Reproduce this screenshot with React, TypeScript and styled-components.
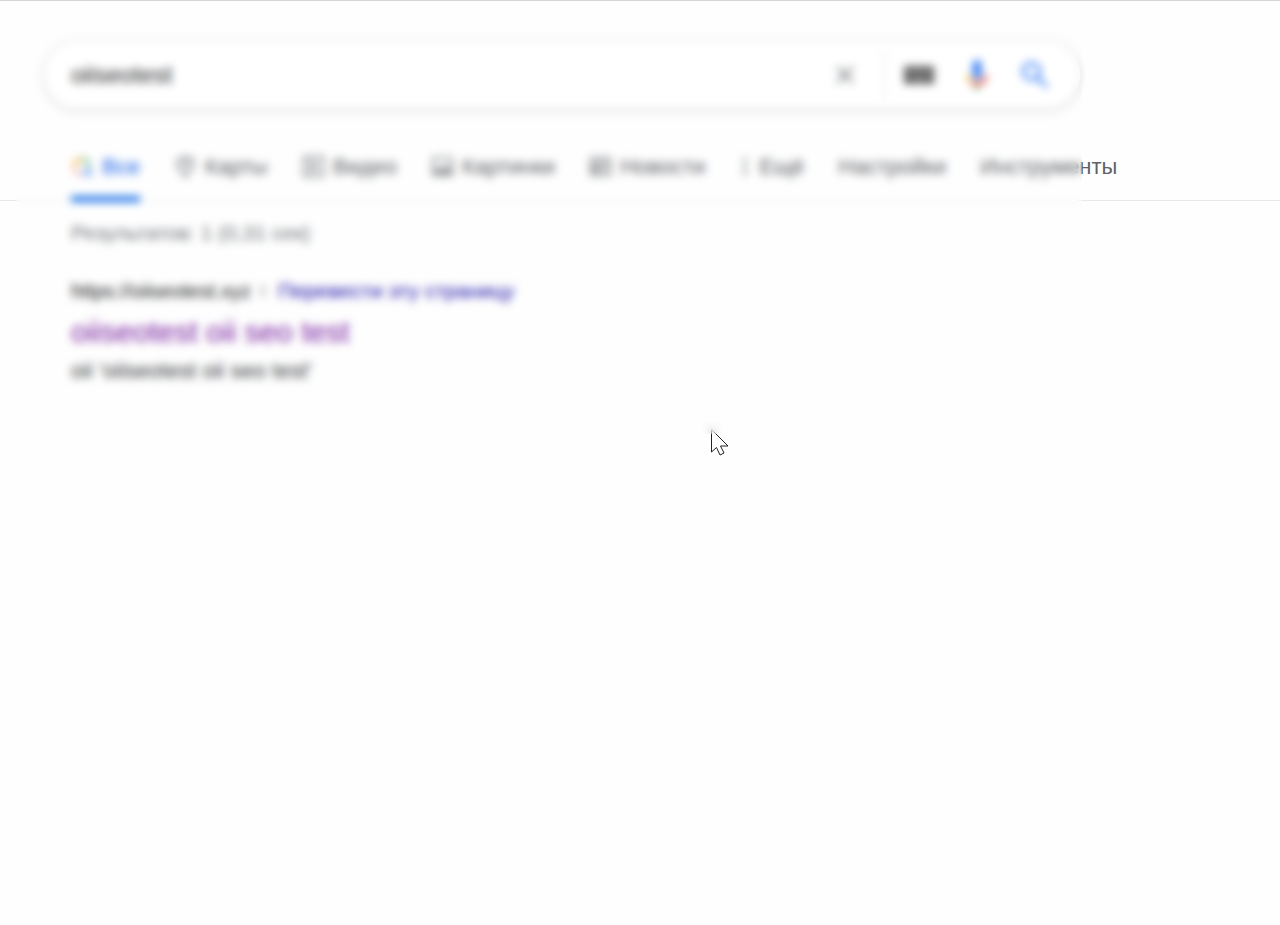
import React from "react";
import styled, { createGlobalStyle } from "styled-components";

const Global = createGlobalStyle`
  * { box-sizing: border-box; }
  body {
    margin: 0;
    background: #fefefe;
    color: #202124;
    font-family: "Liberation Sans", Arial, sans-serif;
  }
`;

const Page = styled.div`
  position: relative;
  min-height: 100vh;
  border-top: 1px solid #d6d6d6;
`;

const Header = styled.header`
  padding: 40px 0 0;
  border-bottom: 1px solid #e8e8e8;
`;

const SearchBar = styled.form`
  display: flex;
  align-items: center;
  max-width: 1036px;
  height: 68px;
  margin: 0 44px;
  padding: 0 16px 0 27px;
  border-radius: 34px;
  background: #fff;
  box-shadow: 0 1px 6px rgba(32, 33, 36, 0.24);
`;

const SearchInput = styled.input`
  flex: 1;
  min-width: 0;
  padding: 0;
  border: 0;
  outline: 0;
  background: transparent;
  color: #303134;
  font: 24px/32px "Liberation Sans", Arial, sans-serif;
`;

const IconButton = styled.button`
  display: flex;
  align-items: center;
  justify-content: center;
  width: 58px;
  height: 48px;
  padding: 0;
  border: 0;
  background: transparent;
`;

const Divider = styled.span`
  width: 1px;
  height: 48px;
  margin: 0 5px 0 10px;
  background: #dfe1e5;
`;

const Tabs = styled.nav`
  display: flex;
  gap: 34px;
  margin: 36px 0 -2px;
  padding-left: 71px;
`;

const Tab = styled.a<{ $active?: boolean }>`
  display: flex;
  align-items: center;
  gap: 8px;
  height: 57px;
  padding: 4px 0 12px;
  border-bottom: 6px solid ${(p) => (p.$active ? "#1a73e8" : "transparent")};
  color: ${(p) => (p.$active ? "#1a66e8" : "#5f6368")};
  font-size: 22px;
  line-height: 24px;
  text-decoration: none;
  white-space: nowrap;
`;

const Results = styled.main`
  padding: 18px 71px 0;
`;

const Stats = styled.p`
  margin: 0;
  color: #70757a;
  font-size: 21px;
  line-height: 28px;
`;

const Result = styled.article`
  margin-top: 30px;
`;

const Source = styled.div`
  display: flex;
  align-items: center;
  gap: 11px;
  font-size: 21px;
  line-height: 28px;
`;

const Site = styled.cite`
  color: #202124;
  font-size: 20px;
  font-style: normal;
`;

const Caret = styled.span`
  width: 5px;
  height: 12px;
  border-left: 2px solid #8a8d91;
`;

const Translate = styled.a`
  color: #1a0dab;
  text-decoration: none;
`;

const Title = styled.h3`
  margin: 8px 0 6px;
  font-size: 30px;
  font-weight: 400;
  line-height: 38px;

  a {
    color: #7b1fa2;
    text-decoration: none;
  }
`;

const Snippet = styled.p`
  margin: 0;
  color: #3c4043;
  font-size: 22px;
  line-height: 28px;
`;

const Veil = styled.div`
  position: absolute;
  top: 24px;
  left: 16px;
  width: calc(100% - 32px);
  max-width: 1066px;
  height: 409px;
  backdrop-filter: blur(4px);
  pointer-events: none;
`;

const Pointer = styled.svg`
  position: absolute;
  top: 426px;
  left: 710px;
`;

const Stroke = ({ children }: { children: React.ReactNode }) => (
  <svg width="23" height="23" viewBox="0 0 24 24" fill="none" stroke="#70757a" strokeWidth="2" aria-hidden="true">
    {children}
  </svg>
);

export default function App() {
  return (
    <>
      <Global />
      <Page>
        <Header>
          <SearchBar onSubmit={(e) => e.preventDefault()}>
            <SearchInput type="text" aria-label="Поиск" defaultValue="oiiseotest" />
            <IconButton type="button" aria-label="Очистить">
              <svg width="24" height="24" viewBox="0 0 24 24" stroke="#70757a" strokeWidth="2.4">
                <path d="M4 4l16 16M20 4L4 20" />
              </svg>
            </IconButton>
            <Divider />
            <IconButton type="button" aria-label="Экранная клавиатура">
              <svg width="32" height="20" viewBox="0 0 32 20">
                <rect x="1" y="1" width="30" height="18" fill="#606060" />
                <path d="M4 6h24M4 10h24" stroke="#ccc" strokeWidth="2" strokeDasharray="2 3" />
                <path d="M9 15h14" stroke="#aaa" strokeWidth="2" />
              </svg>
            </IconButton>
            <IconButton type="button" aria-label="Голосовой поиск">
              <svg width="36" height="36" viewBox="0 0 24 24">
                <path fill="#4285f4" d="M12 15c1.700 0 3-1.300 3-3V5c0-1.700-1.300-3-3-3S9 3.300 9 5v7c0 1.700 1.300 3 3 3z" />
                <path fill="#34a853" d="M11 18.900h2V22h-2z" />
                <path fill="#fbbc05" d="M7 12H5c0 1.900.8 3.700 2.100 4.900l1.400-1.400C7.600 14.700 7 13.400 7 12z" />
                <path fill="#ea4335" d="M12 17c-1.400 0-2.600-.5-3.500-1.500l-1.400 1.400C8.300 18.200 10.100 19 12 19c3.900 0 7-3.100 7-7h-2c0 2.800-2.200 5-5 5z" />
              </svg>
            </IconButton>
            <IconButton type="submit" aria-label="Найти">
              <svg width="34" height="34" viewBox="0 0 24 24" fill="none" stroke="#4285f4" strokeWidth="2.200">
                <circle cx="9.500" cy="9.500" r="5.800" />
                <path d="M14 14l6.500 6.500" />
              </svg>
            </IconButton>
          </SearchBar>
          <Tabs>
            <Tab $active href="#all">
              <svg width="23" height="23" viewBox="0 0 24 24" fill="none" strokeWidth="2.400" aria-hidden="true">
                <path d="M3 12a8 8 0 0 1 8-8" stroke="#f29900" />
                <path d="M11 4a8 8 0 0 1 8 8" stroke="#34a853" />
                <path d="M3 12a8 8 0 0 0 8 8" stroke="#ea4335" strokeOpacity=".5" />
                <path d="M19 12a8 8 0 0 1-8 8M17 17l5 5" stroke="#4285f4" />
              </svg>
              Все
            </Tab>
            <Tab href="#maps">
              <Stroke>
                <path d="M12 23C9 17 3 14 3 9a9 7 0 0 1 18 0c0 5-6 8-9 14z" />
                <circle cx="12" cy="9" r="2" />
              </Stroke>
              Карты
            </Tab>
            <Tab href="#video">
              <Stroke>
                <rect x="2" y="2" width="20" height="20" />
                <path d="M9 7l7 5-7 5z" />
              </Stroke>
              Видео
            </Tab>
            <Tab href="#images">
              <Stroke>
                <rect x="2" y="3" width="20" height="18" rx="2" />
                <path d="M5 18l5-5 3 3 3-4 4 6z" />
              </Stroke>
              Картинки
            </Tab>
            <Tab href="#news">
              <Stroke>
                <rect x="2" y="3" width="20" height="18" rx="2" />
                <path d="M5 8h14M5 12h6v5H5zM14 12h5M14 16h5" />
              </Stroke>
              Новости
            </Tab>
            <Tab href="#more">
              <svg width="12" height="23" viewBox="0 0 12 24" fill="#70757a" aria-hidden="true">
                <circle cx="6" cy="5" r="2" />
                <circle cx="6" cy="12" r="2" />
                <circle cx="6" cy="19" r="2" />
              </svg>
              Ещё
            </Tab>
            <Tab href="#settings">Настройки</Tab>
            <Tab href="#tools">Инструменты</Tab>
          </Tabs>
        </Header>
        <Results>
          <Stats>Результатов: 1 (0,31 сек)</Stats>
          <Result>
            <Source>
              <Site>https://oiiseotest.xyz</Site>
              <Caret />
              <Translate href="#translate">Перевести эту страницу</Translate>
            </Source>
            <Title>
              <a href="#result">oiiseotest oii seo test</a>
            </Title>
            <Snippet>oii 'oiiseotest oii seo test'</Snippet>
          </Result>
        </Results>
        <Pointer width="22" height="30" viewBox="0 0 22 30" aria-hidden="true">
          <path d="M1.500 2.500V25l5-4.500 3.500 7.500 4-2-3.500-7h7.500z" fill="#fff" stroke="#222" strokeWidth="1" />
        </Pointer>
        <Veil />
      </Page>
    </>
  );
}
